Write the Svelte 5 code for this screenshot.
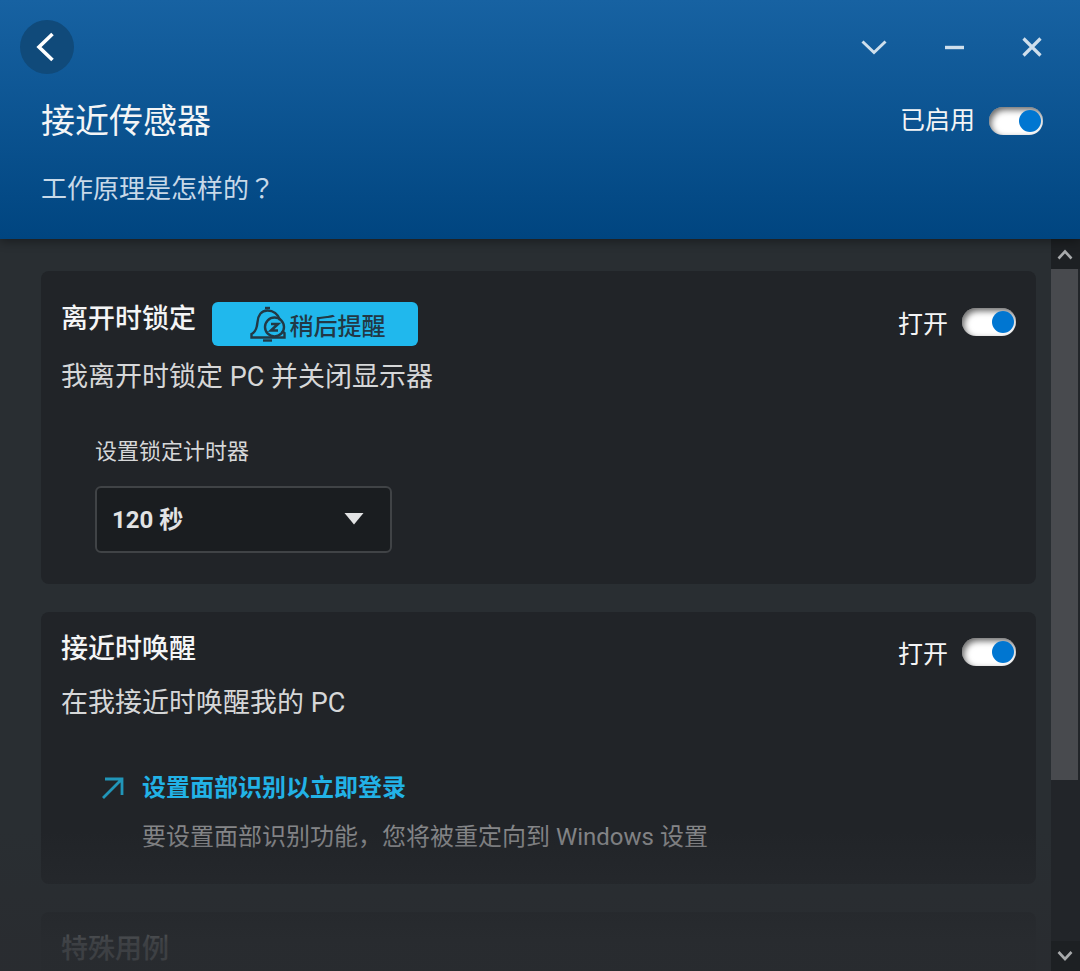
<script>
  const durations = [30, 60, 120, 300];

  let enabled = $state(true);
  let lockOnLeave = $state(true);
  let wakeOnApproach = $state(true);
  let lockTimer = $state(120);
</script>

{#snippet toggle(label, checked, onchange)}
  <label class="toggle">
    <span>{label}</span>
    <input type="checkbox" role="switch" {checked} {onchange} />
  </label>
{/snippet}

<div class="window">
  <header>
    <div class="titlebar">
      <button class="back" aria-label="返回">
        <svg width="54" height="54" viewBox="0 0 54 54">
          <path d="M32.500 14 L19 27 L32.500 40" stroke-width="3.600" />
        </svg>
      </button>
      <div class="controls">
        <button aria-label="折叠">
          <svg width="38" height="38" viewBox="0 0 38 38">
            <path d="M7.500 13.500 L19 24.500 L30.500 13.500" stroke-width="3" />
          </svg>
        </button>
        <button aria-label="最小化">
          <svg width="38" height="38" viewBox="0 0 38 38">
            <path d="M11 19.500 H30" stroke-width="3.400" />
          </svg>
        </button>
        <button aria-label="关闭">
          <svg width="38" height="38" viewBox="0 0 38 38">
            <path d="M10.500 10.500 L27.500 27.500 M27.500 10.500 L10.500 27.500" stroke-width="3.200" />
          </svg>
        </button>
      </div>
    </div>
    <div class="heading">
      <h1>接近传感器</h1>
      {@render toggle("已启用", enabled, () => (enabled = !enabled))}
    </div>
    <a class="how" href="#how">工作原理是怎样的<span class="mark">？</span></a>
  </header>

  <div class="body">
    <main>
      <section class="card card-tall">
        <div class="row">
          <h2>离开时锁定</h2>
          <button class="snooze">
            <svg width="36" height="36" viewBox="0 0 36 36">
              <path d="M15 2 H20" stroke-width="2.400" />
              <path
                d="M30 14 C28 8 23 4.500 17.500 4.500 C11 4.500 8 10 7.500 16 C7 22 6 26 1.500 28 V31.500 H34.500 V27 L32 25"
                stroke-width="2.400"
              />
              <circle cx="24.500" cy="21" r="9.500" stroke-width="2.400" />
              <path d="M21 18 H28 L21 24.500 H28" stroke-width="2.600" />
              <path d="M13 34.500 H22" stroke-width="2.400" />
            </svg>
            稍后提醒
          </button>
          {@render toggle("打开", lockOnLeave, () => (lockOnLeave = !lockOnLeave))}
        </div>
        <p class="description">我离开时锁定 PC 并关闭显示器</p>
        <div class="timer">
          <label for="lock-timer">设置锁定计时器</label>
          <div class="select">
            <select id="lock-timer" bind:value={lockTimer}>
              {#each durations as seconds}
                <option value={seconds}>{seconds} 秒</option>
              {/each}
            </select>
            <svg width="20" height="12" viewBox="0 0 20 12">
              <path d="M0.500 0 H19.500 L10 11.500 Z" />
            </svg>
          </div>
        </div>
      </section>

      <section class="card">
        <div class="row">
          <h2>接近时唤醒</h2>
          {@render toggle("打开", wakeOnApproach, () => (wakeOnApproach = !wakeOnApproach))}
        </div>
        <p class="description">在我接近时唤醒我的 PC</p>
        <div class="face">
          <svg width="24" height="24" viewBox="0 0 24 24">
            <path d="M2 22 L20.500 3.500 M4 3 H21 V19" />
          </svg>
          <div>
            <a href="#face">设置面部识别以立即登录</a>
            <p>要设置面部识别功能，您将被重定向到 Windows 设置</p>
          </div>
        </div>
      </section>

      <section class="card">
        <div class="row">
          <h2>特殊用例</h2>
        </div>
      </section>
      <div class="fade"></div>
    </main>

    <div class="scrollbar">
      <button aria-label="向上滚动">
        <svg width="28" height="30" viewBox="0 0 28 30">
          <path d="M7.500 19.500 L14 12.500 L20.500 19.500" />
        </svg>
      </button>
      <div class="track"><div class="thumb"></div></div>
      <button aria-label="向下滚动">
        <svg width="28" height="30" viewBox="0 0 28 30">
          <path d="M7.500 11 L14 18 L20.500 11" />
        </svg>
      </button>
    </div>
  </div>
</div>

<style>
  :global(body) {
    margin: 0;
    background: #292e32;
  }

  .window {
    height: 100vh;
    display: flex;
    flex-direction: column;
    overflow: hidden;
    background: #292e32;
    color: #f4f5f6;
    font-family: Roboto, "Noto Sans CJK SC", sans-serif;
    font-size: 25px;
  }

  h1,
  h2,
  p {
    margin: 0;
    font-weight: 400;
  }

  button {
    padding: 0;
    border: none;
    background: none;
    color: inherit;
    font: inherit;
  }

  svg {
    display: block;
    fill: none;
    stroke: currentColor;
  }

  a {
    text-decoration: none;
  }

  header {
    position: relative;
    flex-shrink: 0;
    padding: 20px 37px 32px 41px;
    background: linear-gradient(#1762a2, #004580);
    box-shadow: 0 2px 10px rgba(0, 0, 0, 0.4);
  }

  .titlebar {
    display: flex;
    align-items: center;
    justify-content: space-between;
    margin: 0 -8px 0 -21px;
  }

  .back {
    border-radius: 50%;
    background: #104a7a;
    color: #ffffff;
  }

  .controls {
    display: flex;
    gap: 41px;
    color: #cfdfec;
  }

  .heading {
    display: flex;
    align-items: center;
    justify-content: space-between;
    margin-top: 24px;
    line-height: 46px;
  }

  h1 {
    font-size: 34px;
  }

  .how {
    display: block;
    margin-top: 25px;
    color: #c8d9e8;
    font-size: 26px;
    line-height: 36px;
  }

  /* full-width question mark, centred in its box */
  .mark {
    font-family: "Noto Sans CJK TC", sans-serif;
  }

  .toggle {
    display: flex;
    align-items: center;
    gap: 14px;
    height: 40px;
    margin-left: auto;
  }

  .toggle input {
    appearance: none;
    display: flex;
    align-items: center;
    width: 54px;
    height: 28px;
    margin: 0;
    padding: 0 2px;
    box-sizing: border-box;
    border-radius: 14px;
    background: #ffffff;
    box-shadow: inset 2px 3px 6px rgba(0, 0, 0, 0.6);
  }

  .toggle input::before {
    content: "";
    width: 22px;
    height: 22px;
    border-radius: 50%;
    background: #0076d1;
  }

  .toggle input:checked::before {
    margin-left: auto;
  }

  .body {
    flex: 1;
    min-height: 0;
    display: flex;
  }

  main {
    position: relative;
    flex: 1;
    display: flex;
    flex-direction: column;
    gap: 28px;
    padding: 32px 15px 0 41px;
    overflow: hidden;
  }

  .card {
    flex-shrink: 0;
    padding: 20px 20px 31px;
    border-radius: 8px;
    background: #212428;
  }

  .card-tall {
    padding-top: 31px;
  }

  .row {
    display: flex;
    min-height: 40px;
  }

  h2 {
    font-size: 27px;
    font-weight: 500;
    line-height: 34px;
  }

  .snooze {
    display: flex;
    align-items: center;
    justify-content: center;
    gap: 4px;
    width: 206px;
    height: 44px;
    margin-left: 16px;
    padding-left: 5px;
    border-radius: 6px;
    background: #20b8ed;
    color: #223845;
    font-size: 24px;
    font-weight: 500;
  }

  .description {
    margin-top: 13px;
    color: #d6d7d8;
    font-size: 27px;
    line-height: 36px;
  }

  .timer {
    margin: 41px 0 0 34px;
  }

  .timer label {
    display: block;
    color: #d6d7d8;
    font-size: 22px;
    line-height: 32px;
  }

  .select {
    position: relative;
    width: 297px;
    margin-top: 18px;
  }

  select {
    appearance: none;
    display: block;
    width: 100%;
    height: 67px;
    padding: 0 15px;
    border: 2px solid #404346;
    border-radius: 6px;
    background: #1a1d20;
    color: #e2e3e4;
    font: inherit;
    font-size: 24px;
    font-weight: 700;
  }

  .select svg {
    position: absolute;
    top: 27px;
    right: 28px;
    fill: #e2e3e4;
    stroke: none;
    pointer-events: none;
  }

  .face {
    display: flex;
    gap: 17px;
    margin: 51px 0 0 40px;
    font-size: 24px;
    line-height: 32px;
  }

  .face svg {
    margin-top: 4px;
    stroke: #2196b9;
    stroke-width: 2.8;
  }

  .face a {
    color: #22b2e6;
    font-weight: 700;
  }

  .face p {
    margin-top: 17px;
    color: #858688;
  }

  .fade {
    position: absolute;
    right: 0;
    bottom: 0;
    left: 0;
    height: 140px;
    background: linear-gradient(rgba(41, 46, 50, 0), rgba(41, 44, 48, 0.9) 80%);
    pointer-events: none;
  }

  .scrollbar {
    display: flex;
    flex-direction: column;
    width: 29px;
    background: #222529;
  }

  .scrollbar button {
    background: #1d2023;
    color: #a8aaac;
  }

  .scrollbar svg {
    stroke-width: 2.6;
  }

  .track {
    flex: 1;
  }

  .thumb {
    width: 27px;
    height: 76%;
    background: #484a4e;
  }
</style>
